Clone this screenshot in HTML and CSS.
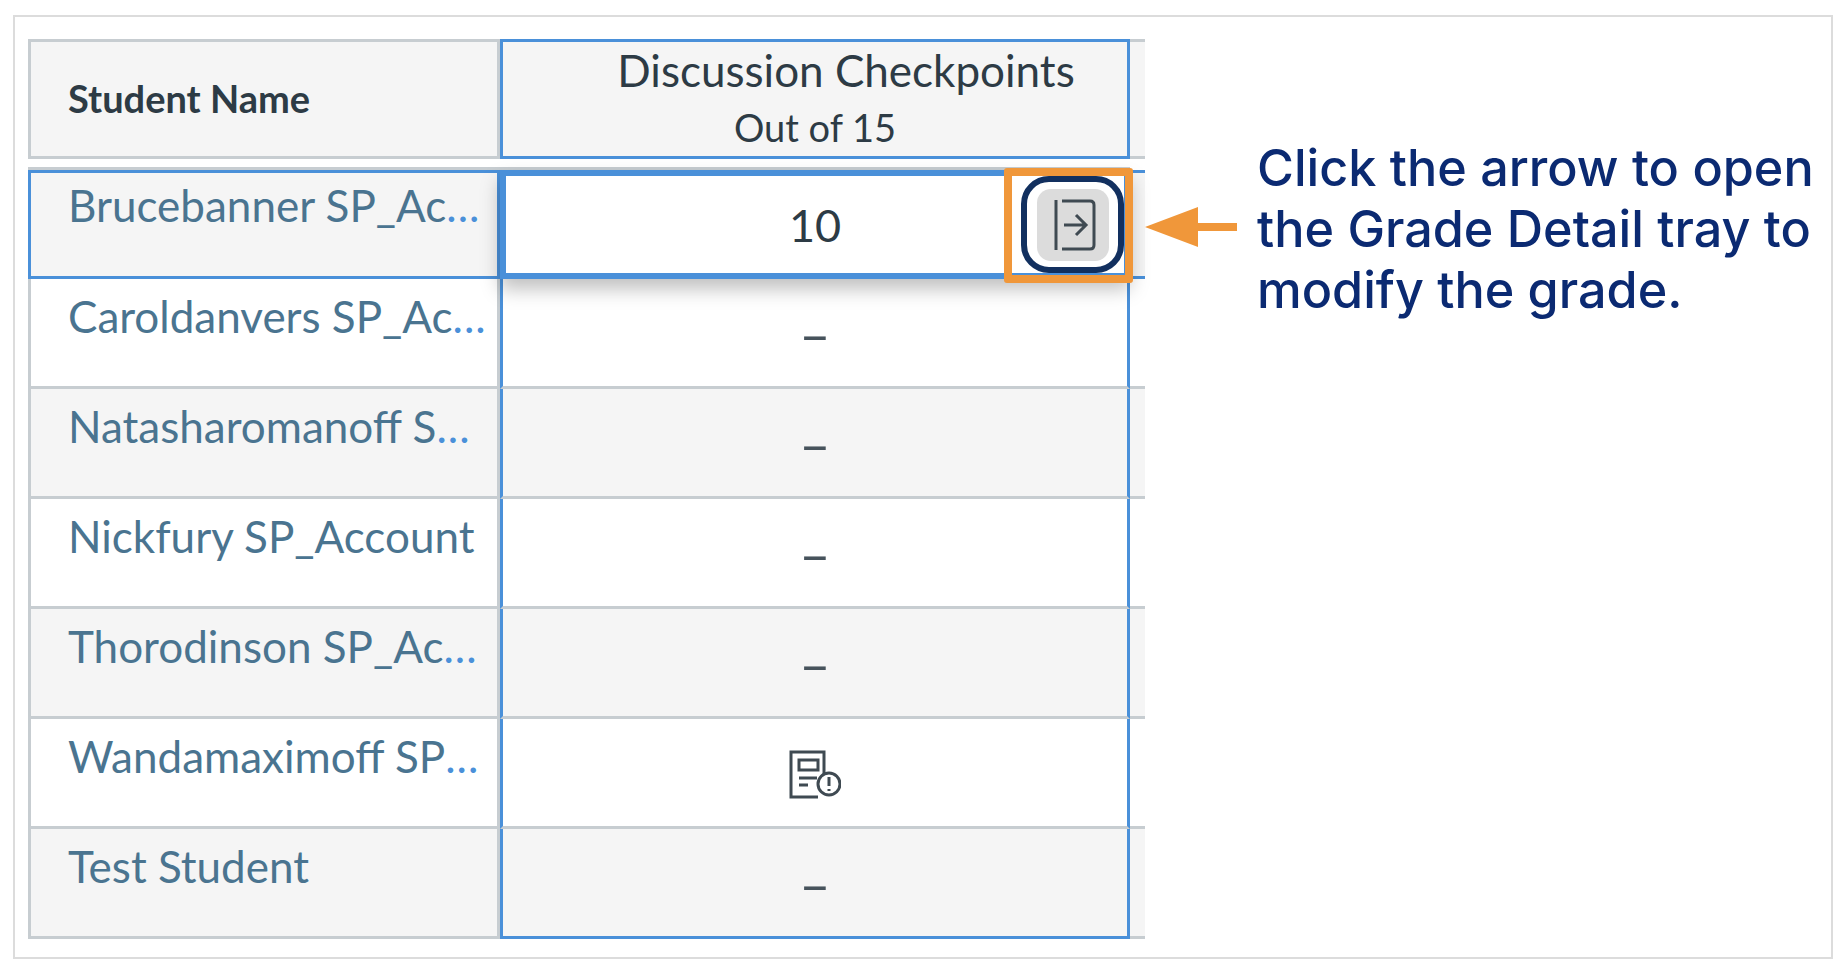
FILE: index.html
```html
<!DOCTYPE html>
<html lang="en">
    <head>
        <meta charset="utf-8">
        <title>Grade Detail tray</title>
        <link rel="stylesheet" href="styles.css">
    </head>
    <body>
        <div class="frame">
            <div class="gradebook">
                <div class="row head-row">
                    <div class="name-cell head-name">Student Name</div>
                    <div class="grade-cell head-grade">
                        <div class="head-title">Discussion Checkpoints</div>
                        <div class="head-sub">Out of 15</div>
                    </div>
                    <div class="stub"></div>
                </div>
                <div class="spacer"></div>
                <div class="row active-row shaded">
                    <div class="name-cell"><span>Brucebanner SP_Ac<span class="dots">...</span></span></div>
                    <div class="grade-cell grade-value">10</div>
                    <div class="stub"></div>
                    <!-- the orange box lies over the cell -->
                    <div class="callout-box">
                        <div class="tray-button">
                            <div class="tray-inner">
                                <svg class="tray-icon" viewBox="0 0 42 52" width="42" height="52">
                                    <path d="M2 1V51" />
                                    <path d="M8 2H36Q40 2 40 6V46Q40 50 36 50H8" />
                                    <path d="M10 26H32M22 16L32 26L22 36" />
                                </svg>
                            </div>
                        </div>
                    </div>
                </div>
                <div class="row">
                    <div class="name-cell"><span>Caroldanvers SP_Ac<span class="dots">...</span></span></div>
                    <div class="grade-cell dash">–</div>
                    <div class="stub"></div>
                </div>
                <div class="row shaded">
                    <div class="name-cell"><span>Natasharomanoff S<span class="dots">...</span></span></div>
                    <div class="grade-cell dash">–</div>
                    <div class="stub"></div>
                </div>
                <div class="row">
                    <div class="name-cell"><span>Nickfury SP_Account</span></div>
                    <div class="grade-cell dash">–</div>
                    <div class="stub"></div>
                </div>
                <div class="row shaded">
                    <div class="name-cell"><span>Thorodinson SP_Ac<span class="dots">...</span></span></div>
                    <div class="grade-cell dash">–</div>
                    <div class="stub"></div>
                </div>
                <div class="row">
                    <div class="name-cell"><span>Wandamaximoff SP<span class="dots">...</span></span></div>
                    <div class="grade-cell icon-cell">
                        <svg class="missing-icon" viewBox="0 0 52 50" width="52" height="50">
                            <path d="M35 24V2H2V47H29" />
                            <path d="M10 10H29V20H10Z" />
                            <path d="M10 28H28M10 35H19" />
                            <circle cx="40" cy="34" r="11" />
                            <path d="M40 27V36M40 39V41" />
                        </svg>
                    </div>
                    <div class="stub"></div>
                </div>
                <div class="row shaded last-row">
                    <div class="name-cell"><span>Test Student</span></div>
                    <div class="grade-cell dash">–</div>
                    <div class="stub"></div>
                </div>
            </div>

            <div class="note">
                <svg class="note-arrow" viewBox="0 0 92 40" width="92" height="40">
                    <path d="M0 20L53 0V16H92V24H53V40Z" />
                </svg>
                <p class="note-text">Click the arrow to open the Grade Detail tray to modify the grade.</p>
            </div>
        </div>
    </body>
</html>
```

FILE: styles.css
```css
body {
    margin: 0;
    background-color: white;
    font-family: Lato, "Liberation Sans", sans-serif;
    color: #2d3b45;
}

/* outer grey frame */
.frame {
    width: 1820px;
    height: 944px;
    margin: 15px 0 0 13px;
    padding: 22px 0 0 13px;
    box-sizing: border-box;
    border: 2px solid #dcdcdc;
    display: flex;
    align-items: flex-start;
}

.gradebook {
    width: 1117px;
    flex-shrink: 0;
}

.row {
    display: grid;
    grid-template-columns: 472px 630px 15px;
    height: 110px;
    position: relative;
}

.spacer {
    height: 11px;
    border-bottom: 3px solid #c7cdd1;
    box-sizing: border-box;
    margin-right: 15px;
}

.head-row {
    height: 120px;
}

.shaded .name-cell,
.shaded .grade-cell,
.shaded .stub,
.head-row .name-cell,
.head-row .grade-cell,
.head-row .stub {
    background-color: #f5f5f5;
}

.name-cell {
    box-sizing: border-box;
    border: 3px solid #c7cdd1;
    border-top: none;
    padding: 12px 0 0 37px;
    font-size: 44px;
    line-height: 50px;
    color: #4a7490;
    white-space: nowrap;
    overflow: hidden;
}

.dots {
    color: #4a90d9;
    letter-spacing: 1px;
}

.grade-cell {
    box-sizing: border-box;
    border-left: 3px solid #4a90d9;
    border-right: 3px solid #4a90d9;
    border-bottom: 3px solid #c7cdd1;
    display: flex;
    align-items: center;
    justify-content: center;
    color: #2d3b45;
}

.grade-value {
    font-size: 45px;
}

.stub {
    box-sizing: border-box;
    border-bottom: 3px solid #c7cdd1;
}

.dash {
    font-size: 54px;
    padding-top: 2px;
    color: #47535c;
}

.icon-cell {
    padding-top: 4px;
}

.head-row .name-cell {
    border-top: 3px solid #c7cdd1;
    display: flex;
    align-items: center;
    font-weight: 700;
    font-size: 38px;
    color: #2d3b45;
    padding-top: 0;
    padding-bottom: 2px;
}

.head-row .grade-cell {
    border: 3px solid #4a90d9;
    flex-direction: column;
    padding-bottom: 3px;
}

.head-row .stub {
    border-top: 3px solid #c7cdd1;
}

.head-title {
    font-size: 44px;
    line-height: 56px;
    margin-left: 62px;
    margin-bottom: 3px;
}

.head-sub {
    font-size: 38px;
    line-height: 52px;
}

.active-row {
    height: 109px;
}

.active-row .name-cell {
    border: 3px solid #4a90d9;
    padding-top: 7px;
}

.active-row .grade-cell {
    background-color: white;
    border: 6px solid #4a90d9;
    box-shadow: 0 10px 18px rgba(0, 0, 0, 0.25);
    z-index: 1;
}

.active-row .stub {
    background-color: #f5f5f5;
    border-top: 3px solid #4a90d9;
    border-bottom: 3px solid #4a90d9;
}

.last-row .grade-cell {
    border-bottom: 3px solid #4a90d9;
}

.callout-box {
    position: absolute;
    left: 976px;
    top: -2px;
    width: 129px;
    height: 115px;
    box-sizing: border-box;
    border: 8px solid #f0973a;
    border-radius: 3px;
    z-index: 2;
    display: flex;
    justify-content: flex-end;
}

.tray-button {
    width: 103px;
    height: 97px;
    margin-right: 1px;
    box-sizing: border-box;
    border: 6px solid #12305f;
    border-radius: 28px;
    background-color: white;
    display: flex;
    align-items: center;
    justify-content: center;
}

.tray-inner {
    width: 72px;
    height: 72px;
    border-radius: 14px;
    background-color: #dcdcdc;
    display: flex;
    align-items: center;
    justify-content: center;
}

.tray-icon {
    margin-left: 4px;
}

.tray-icon path {
    fill: none;
    stroke: #3f4a52;
    stroke-width: 3;
}

.missing-icon path,
.missing-icon circle {
    fill: none;
    stroke: #3f4a52;
    stroke-width: 3;
}

.note {
    display: flex;
    align-items: flex-start;
    margin-top: 98px;
}

.note-arrow {
    flex-shrink: 0;
    margin: 70px 20px 0 0;
    fill: #f0973a;
}

.note-text {
    margin: 0;
    width: 600px;
    font-family: Inter, "Liberation Sans", sans-serif;
    font-weight: 500;
    font-size: 50.3px;
    line-height: 61px;
    color: #0b2a72;
}
```
